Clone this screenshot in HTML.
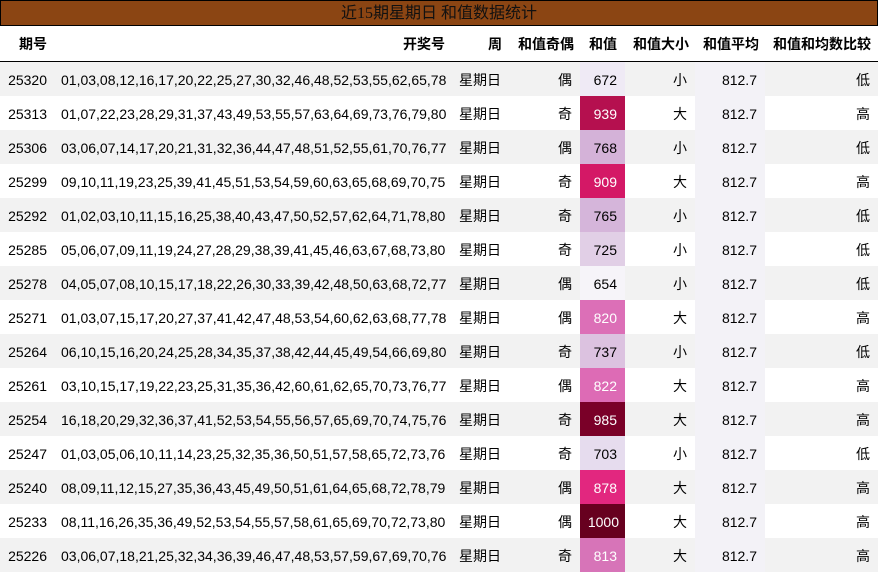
<!DOCTYPE html><html><head><meta charset="utf-8"><style>
body{margin:0;width:878px;height:573px;background:#fff;font-family:"Liberation Sans","Noto Sans CJK SC",sans-serif;font-size:14px;color:#000;overflow:hidden}
.t{position:absolute;left:0;top:0;width:876px;height:24px;background:#8b4513;border:1px solid #000;text-align:center;line-height:25px;font-size:16px;font-family:"Liberation Serif","Noto Sans CJK SC",serif;color:#111}
table{position:absolute;left:0;top:26px;border-collapse:collapse;table-layout:fixed;width:878px}
td,th{padding:1px 8px 0 8px;white-space:nowrap;text-align:right}
th{font-weight:bold;height:34px;border-bottom:1px solid #000}
td{height:33px}
tbody tr:nth-child(odd){background:#f2f2f2}
td.l{text-align:left;padding-left:6px}
td.a{background:#f3f2f7}
</style></head><body>
<div class="t">近15期星期日 和值数据统计</div>
<table>
<colgroup><col style="width:55px"><col style="width:398px"><col style="width:57px"><col style="width:70px"><col style="width:45px"><col style="width:70px"><col style="width:70px"><col style="width:113px"></colgroup>
<thead><tr><th>期号</th><th>开奖号</th><th>周</th><th>和值奇偶</th><th>和值</th><th>和值大小</th><th>和值平均</th><th>和值和均数比较</th></tr></thead>
<tbody>
<tr><td>25320</td><td class="l">01,03,08,12,16,17,20,22,25,27,30,32,46,48,52,53,55,62,65,78</td><td class="l">星期日</td><td>偶</td><td style="background:#efeaf5">672</td><td>小</td><td class="a">812.7</td><td>低</td></tr>
<tr><td>25313</td><td class="l">01,07,22,23,28,29,31,37,43,49,53,55,57,63,64,69,73,76,79,80</td><td class="l">星期日</td><td>奇</td><td style="background:#b5104f;color:#fff">939</td><td>大</td><td class="a">812.7</td><td>高</td></tr>
<tr><td>25306</td><td class="l">03,06,07,14,17,20,21,31,32,36,44,47,48,51,52,55,61,70,76,77</td><td class="l">星期日</td><td>偶</td><td style="background:#d4b2d8">768</td><td>小</td><td class="a">812.7</td><td>低</td></tr>
<tr><td>25299</td><td class="l">09,10,11,19,23,25,39,41,45,51,53,54,59,60,63,65,68,69,70,75</td><td class="l">星期日</td><td>奇</td><td style="background:#d41866;color:#fff">909</td><td>大</td><td class="a">812.7</td><td>高</td></tr>
<tr><td>25292</td><td class="l">01,02,03,10,11,15,16,25,38,40,43,47,50,52,57,62,64,71,78,80</td><td class="l">星期日</td><td>奇</td><td style="background:#d5b5da">765</td><td>小</td><td class="a">812.7</td><td>低</td></tr>
<tr><td>25285</td><td class="l">05,06,07,09,11,19,24,27,28,29,38,39,41,45,46,63,67,68,73,80</td><td class="l">星期日</td><td>奇</td><td style="background:#e1cfe6">725</td><td>小</td><td class="a">812.7</td><td>低</td></tr>
<tr><td>25278</td><td class="l">04,05,07,08,10,15,17,18,22,26,30,33,39,42,48,50,63,68,72,77</td><td class="l">星期日</td><td>偶</td><td style="background:#f6f4f9">654</td><td>小</td><td class="a">812.7</td><td>低</td></tr>
<tr><td>25271</td><td class="l">01,03,07,15,17,20,27,37,41,42,47,48,53,54,60,62,63,68,77,78</td><td class="l">星期日</td><td>偶</td><td style="background:#dc6fb7;color:#fff">820</td><td>大</td><td class="a">812.7</td><td>高</td></tr>
<tr><td>25264</td><td class="l">06,10,15,16,20,24,25,28,34,35,37,38,42,44,45,49,54,66,69,80</td><td class="l">星期日</td><td>奇</td><td style="background:#dcc2e0">737</td><td>小</td><td class="a">812.7</td><td>低</td></tr>
<tr><td>25261</td><td class="l">03,10,15,17,19,22,23,25,31,35,36,42,60,61,62,65,70,73,76,77</td><td class="l">星期日</td><td>偶</td><td style="background:#dd6bb5;color:#fff">822</td><td>大</td><td class="a">812.7</td><td>高</td></tr>
<tr><td>25254</td><td class="l">16,18,20,29,32,36,37,41,52,53,54,55,56,57,65,69,70,74,75,76</td><td class="l">星期日</td><td>奇</td><td style="background:#7a0028;color:#fff">985</td><td>大</td><td class="a">812.7</td><td>高</td></tr>
<tr><td>25247</td><td class="l">01,03,05,06,10,11,14,23,25,32,35,36,50,51,57,58,65,72,73,76</td><td class="l">星期日</td><td>奇</td><td style="background:#e6dcee">703</td><td>小</td><td class="a">812.7</td><td>低</td></tr>
<tr><td>25240</td><td class="l">08,09,11,12,15,27,35,36,43,45,49,50,51,61,64,65,68,72,78,79</td><td class="l">星期日</td><td>偶</td><td style="background:#e2277f;color:#fff">878</td><td>大</td><td class="a">812.7</td><td>高</td></tr>
<tr><td>25233</td><td class="l">08,11,16,26,35,36,49,52,53,54,55,57,58,61,65,69,70,72,73,80</td><td class="l">星期日</td><td>偶</td><td style="background:#67001f;color:#fff;padding:1px 6px 0 0">1000</td><td>大</td><td class="a">812.7</td><td>高</td></tr>
<tr><td>25226</td><td class="l">03,06,07,18,21,25,32,34,36,39,46,47,48,53,57,59,67,69,70,76</td><td class="l">星期日</td><td>奇</td><td style="background:#d774b8;color:#fff">813</td><td>大</td><td class="a">812.7</td><td>高</td></tr>
</tbody></table>
</body></html>
